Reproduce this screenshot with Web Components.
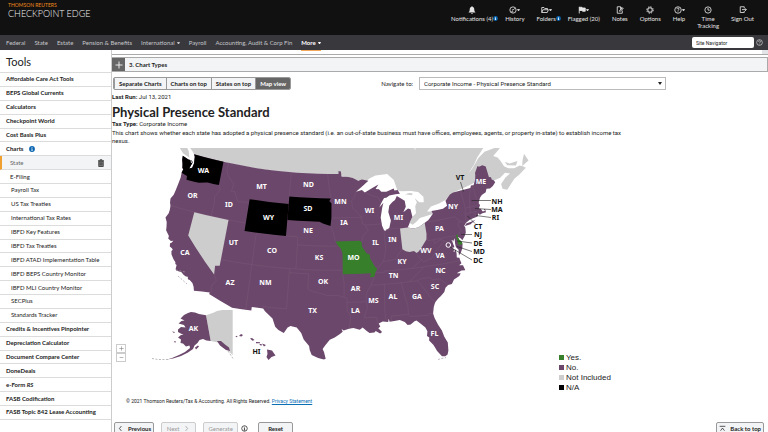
<!DOCTYPE html>
<html lang="en">
<head>
<meta charset="utf-8">
<title>Checkpoint Edge</title>
<style>
html,body{margin:0;height:100%}
body{overflow:hidden;background:#fff;color:#222;font:6px/8px Lato,"Noto Sans",sans-serif}
</style>
</head>
<body>
<checkpoint-app></checkpoint-app>
<script>
const define=(name,html,init)=>customElements.define(name,class extends HTMLElement{
  constructor(){
    super();
    const t=document.createElement('template');
    t.innerHTML=html;
    this.attachShadow({mode:'open'}).append(t.content.cloneNode(true));
  }
  connectedCallback(){ if(init&&!this.ready){this.ready=true;init(this,this.shadowRoot);} }
});

define('info-badge',`<style>
:host{display:inline-block;width:6px;height:6px;flex:none}
svg{display:block;width:100%;height:100%}
</style><svg viewBox="0 0 12 12"><circle cx="6" cy="6" r="5.8" fill="#0a66b0"/><path d="M5.2 2.3h1.7v1.6H5.2zM4.6 5h2.3v3.6h.8v1H4.4v-1h.8V6h-.6z" fill="#fff"/></svg>`);

const glyphs={
bell:'<path fill="currentColor" stroke="none" d="M8 .5c.8 0 1.2.5 1.2 1.2C11.8 2.6 12.6 5 12.6 7.5c0 2.5.8 3.7 2 4.7v1H1.4v-1c1.2-1 2-2.2 2-4.7C3.4 5 4.2 2.6 6.8 1.7 6.8 1 7.2.5 8 .5zM6.2 13.8h3.6c-.2 1.2-.9 1.7-1.8 1.7s-1.6-.5-1.8-1.7z"/>',
history:'<circle cx="8" cy="8" r="6.3"/><path d="M11.5 4.5 8 8.5 5.8 7M4.5 11.5h4"/>',
folder:'<path d="M1.5 13V3h4.5l1.5 2h5.5v2.5M1.5 13l2.3-5.5h11L12.5 13z"/>',
flag:'<path d="M2.5 1.5v13.5"/><path fill="currentColor" d="M3 2.5h5l1 1.5h5.5v6.5H9l-1-1.5H3z"/>',
notes:'<path d="M12.5 9v5.5h-10v-13h6.5l3.5 3.5M9 1.5v4h3M7 10.5l.5-2L13 3.5l1.5 1.5L9 10z"/>',
gear:'<circle cx="8" cy="8" r="4.5" stroke-width="2"/><circle cx="8" cy="8" r="6.4" stroke-width="2" stroke-dasharray="2.8 2.226"/>',
help:'<circle cx="8" cy="8" r="6.5"/><path d="M5.8 6.3c0-3 4.4-2.8 4.4-.2C10.2 7.8 8 7.8 8 9.5M8 11v1.3"/>',
clock:'<circle cx="8" cy="8" r="6.3"/><path d="M8 4v4.3h3.5"/>',
exit:'<path d="M10.5 4.5V1.5h-8v11.5h8V10M6 7.2h8.5M12 4.5l2.7 2.7L12 10"/>',
trash:'<path fill="#999" d="M3.5 4.5h9v10.5h-9z"/><path d="M2 3.5h12M6 3V1.5h4V3M6 6.5v6.5M8 6.5v6.5M10 6.5v6.5"/>',
info:'<circle cx="8" cy="8" r="6.3"/><path d="M8 4v1.5M6.5 7H8v4.5M6.3 11.8h3.5"/>',
left:'<path d="M10 2.5 5.5 8 10 13.5"/>',
right:'<path d="M6 2.5 10.5 8 6 13.5"/>',
top:'<path d="M1.5 3h13M3.5 13 8 7l4.5 6"/>',
plus:'<path d="M8 1v14M1 8h14"/>',
minus:'<path d="M2 8h12"/>'
};
define('line-icon',`<style>
:host{display:inline-block;width:8px;height:8px;flex:none}
svg{display:block;width:100%;height:100%;fill:none;stroke:currentColor;stroke-width:1.7}
</style><svg viewBox="0 0 16 16" aria-hidden="true"></svg>`,(h,r)=>{r.querySelector('svg').innerHTML=glyphs[h.getAttribute('name')];});

define('tool-link',`<style>
:host{display:block}
a{position:relative;display:flex;flex-direction:column;align-items:center;color:#e4e4e4;text-decoration:none;font-size:6px;line-height:7px;text-align:center;gap:1px}
.icon{display:flex;align-items:center;height:9px}
.caret{display:none;border:1px solid transparent;border-top:2px solid #ccc;border-bottom:0;width:1px}
:host([caret]) .caret{display:block}
info-badge{display:none;position:absolute;left:100%;bottom:1px;width:5px;height:5px}
:host([badge]) info-badge{display:block}
</style><a href="#"><span class="icon"><line-icon></line-icon><i class="caret"></i></span><span><slot></slot></span><info-badge></info-badge></a>`,
(h,r)=>{const i=document.createElement('line-icon');i.setAttribute('name',h.getAttribute('icon'));r.querySelector('line-icon').replaceWith(i);});

define('top-bar',`<style>
:host{display:flex;justify-content:space-between;background:#111;min-height:35px;box-sizing:border-box;padding:2px 14px 4px 8px}
.brand{color:#f08c1c;font-size:5px;line-height:7px}
.brand b{display:block;font-weight:300;font-size:9px;line-height:9px;color:#f4f4f4}
nav{display:flex;gap:12px;padding-top:3px}
</style>
<div class="brand"><span>THOMSON REUTERS</span><b>CHECKPOINT EDGE</b></div>
<nav>
<tool-link icon="bell" badge>Notifications (4)</tool-link><tool-link icon="history" caret>History</tool-link>
<tool-link icon="folder" caret badge>Folders</tool-link><tool-link icon="flag" caret>Flagged (20)</tool-link>
<tool-link icon="notes">Notes</tool-link><tool-link icon="gear">Options</tool-link><tool-link icon="help" caret>Help</tool-link>
<tool-link icon="clock">Time<br>Tracking</tool-link><tool-link icon="exit">Sign Out</tool-link>
</nav>`);

define('main-nav',`<style>
:host{display:flex;align-items:center;background:#38383d;min-height:15px;padding:0 5px 0 6px}
nav{display:flex;gap:9px;flex:1;align-self:stretch}
a{display:flex;align-items:center;gap:2px;color:#c6c6c9;text-decoration:none;font-size:6px;line-height:7px}
a.on{color:#fff;font-weight:700;border-bottom:1px solid #f0a95a;margin-bottom:-1px}
i{border:1px solid transparent;border-top:2px solid currentColor;border-bottom:0;width:1px}
input{width:62px;height:11px;box-sizing:border-box;border:0;border-radius:2px;background:#fff;padding:0 4px;font:5px/7px Roboto,sans-serif;color:#222;margin-right:2px}
input::placeholder{color:#222;opacity:1}
line-icon{color:#ccc;width:7px;height:7px}
</style>
<nav><a href="#">Federal</a><a href="#">State</a><a href="#">Estate</a><a href="#">Pension &amp; Benefits</a><a href="#">International<i></i></a><a href="#">Payroll</a><a href="#">Accounting, Audit &amp; Corp Fin</a><a href="#" class="on">More<i></i></a></nav>
<input aria-label="Site Navigator" placeholder="Site Navigator"><line-icon name="help"></line-icon>`);

define('side-item',`<style>
:host{flex:1 1 0;min-height:10px;display:flex;align-items:center;border-bottom:1px solid #dcdcdc;box-sizing:border-box;padding:0 6px;font-size:6px;line-height:8px}
a{color:#222;text-decoration:none;font-weight:700}
:host([sub]){padding-left:11px}
:host([first]){padding-left:10px}
:host([sub]) a,:host([first]) a{font-weight:400}
:host([selected]){background:#f3f4f6;border-left:2px solid #f0a030;padding-left:8px}
:host([selected]) a{color:#666}
slot[name=end]{display:contents}
::slotted(info-badge){margin-left:5px}
::slotted(line-icon){margin-left:auto}
</style><a href="#"><slot></slot></a><slot name="end"></slot>`);

define('side-bar',`<style>
:host{display:flex;flex-direction:column;width:112px;flex:none;box-sizing:border-box;border-right:1px solid #ccc;padding-bottom:12px}
h2{margin:0;padding:5px 6px 3px;font-weight:400;font-size:11px;line-height:14px;border-bottom:1px solid #dcdcdc}
nav{flex:1;display:flex;flex-direction:column}
line-icon{color:#333}
</style><h2>Tools</h2><nav>
<side-item>Affordable Care Act Tools</side-item><side-item>BEPS Global Currents</side-item><side-item>Calculators</side-item><side-item>Checkpoint World</side-item><side-item>Cost Basis Plus</side-item>
<side-item>Charts<info-badge slot="end"></info-badge></side-item>
<side-item selected first>State<line-icon slot="end" name="trash"></line-icon></side-item><side-item first>E-Filing</side-item>
<side-item sub>Payroll Tax</side-item><side-item sub>US Tax Treaties</side-item><side-item sub>International Tax Rates</side-item><side-item sub>IBFD Key Features</side-item><side-item sub>IBFD Tax Treaties</side-item><side-item sub>IBFD ATAD Implementation Table</side-item><side-item sub>IBFD BEPS Country Monitor</side-item><side-item sub>IBFD MLI Country Monitor</side-item><side-item sub>SECPlus</side-item><side-item sub>Standards Tracker</side-item>
<side-item>Credits &amp; Incentives Pinpointer</side-item><side-item>Depreciation Calculator</side-item><side-item>Document Compare Center</side-item><side-item>DoneDeals</side-item><side-item>e-Form <em>RS</em></side-item><side-item>FASB Codification</side-item><side-item>FASB Topic 842 Lease Accounting</side-item>
</nav>`);

define('accordion-row',`<style>
:host{display:flex;border:1px solid #aaa;border-left:0;background:#f3f4f6;margin-top:2px;min-height:13px}
button{width:13px;border:0;padding:0;background:#666;color:#fff;display:grid;place-items:center}
h3{margin:0;padding:0 4px;align-self:center;font-size:6px;line-height:8px}
</style><button aria-label="Expand"><line-icon name="plus"></line-icon></button><h3><slot></slot></h3>`);

define('view-switch',`<style>
:host{display:flex;border:1px solid #999;border-radius:2px;overflow:hidden}
button{border:0;border-left:1px solid #999;background:#f3f4f6;color:#222;font:700 6px/11px Lato,sans-serif;padding:0 4px}
button:first-child{border:0}
button[aria-pressed=true]{background:#666;color:#fff}
</style><button>Separate Charts</button><button>Charts on top</button><button>States on top</button><button aria-pressed="true">Map view</button>`);

/* ---------- map: Albers equal-area conic, points are "degrees west,degrees north" ---------- */
const parse=s=>s.trim().split(/\s+/).map(p=>p.split(',').map(Number));
const rad=Math.PI/180,n=.60285,C=1.3512;
function project([w,lat]){
  const rho=Math.sqrt(C-2*n*Math.sin(lat*rad))/n,th=(96-w)*n*rad;
  return [334+457*rho*Math.sin(th),458*rho*Math.cos(th)-330.6];
}
function path(s,close){
  const p=parse(s);if(close)p.push(p[0]);
  const out=[];
  p.forEach((b,i)=>{
    if(i){const a=p[i-1],k=Math.max(1,Math.ceil(Math.abs(b[0]-a[0])/2));
      for(let j=1;j<k;j++)out.push(project([a[0]+(b[0]-a[0])*j/k,a[1]+(b[1]-a[1])*j/k]));}
    out.push(project(b));
  });
  return 'M'+out.map(q=>q.map(v=>v.toFixed(1)).join(' ')).join('L')+(close?'Z':'');
}
const usa=`124.7,48.4 124.6,47.9 124.35,47.5 124.2,47.2 124.1,46.9 123.9,46.8 124.0,46.3 123.9,45.7 124.0,44.8 124.1,44.0 124.2,43.4 124.55,42.84 124.4,42.3 124.2,42 124.1,41.5 124.1,41 124.4,40.4 124,39.9 123.8,39.3 123.7,38.9 123,38.3 123,38 122.5,37.8 122.1,37.9 122.3,37.6 122.5,37.5 122.4,37.1 122,36.95 121.8,36.8 121.95,36.6 121.8,36.2 121.3,35.7 120.9,35.4 120.85,35.2 120.6,35.1 120.6,34.6 120.45,34.45 119.6,34.4 119.2,34.15 118.8,34 118.5,34.03 118.4,33.75 118.1,33.7 117.6,33.4 117.3,33 117.12,32.53 114.72,32.72 114.8,32.5 111.07,31.33 108.21,31.33 108.21,31.78 106.53,31.78 106.2,31.45 105,30.65 104.5,29.65 104,29.3 103.2,28.98 102.7,29.7 102.3,29.88 101.4,29.77 100.7,29.1 100.3,28.3 99.5,27.5 99.4,27 99.1,26.4 98.2,26.05 97.4,25.85 97.15,25.95 97.4,26.8 97.6,27.2 97.2,27.7 96.6,28.35 95.9,28.65 95.2,29.05 94.75,29.35 94.9,29.7 94.6,29.5 93.85,29.7 93.2,29.78 92.3,29.55 91.85,29.8 91.3,29.35 90.9,29.1 90.2,29.1 90,29.3 89.4,28.95 89.1,29.1 89.6,29.6 89.3,29.8 89.5,30.2 88.9,30.4 88.1,30.3 88,30.7 87.9,30.3 87.2,30.35 86.4,30.4 85.7,30.1 85.35,29.68 84.9,29.7 84.3,30.05 84,30.1 83.4,29.6 82.85,29.1 82.65,28.6 82.8,28 82.5,27.8 82.6,27.4 82.1,26.8 81.9,26.4 81.7,25.95 81.15,25.2 80.7,25.15 80.35,25.3 80.15,25.8 80.05,26.8 80.4,27.6 80.6,28.4 81,29.2 81.35,30.1 81.45,30.7 81.2,31.5 80.9,32.03 80.4,32.4 79.9,32.7 79.3,33.1 79,33.6 78.55,33.86 77.95,33.9 77.5,34.4 76.6,34.7 76.3,35 76.9,35.1 76.1,35.3 75.5,35.25 75.7,35.9 76.3,36 75.85,36.2 75.97,36.55 76,36.9 76.4,37 76.3,37.5 76.3,37.9 76.9,38.3 76.4,38.3 76.5,39 76.1,39.4 76.2,38.8 76.2,38.3 75.85,37.9 76,37.2 75.6,37.5 75.2,38 75.05,38.5 75.1,38.8 75.4,39.1 75.55,39.5 75.1,39.2 74.95,38.95 74.4,39.4 74.1,39.8 74,40.4 74.1,40.65 73.7,40.95 72.9,41.25 71.9,41.33 71.5,41.38 71.35,41.75 71.1,41.5 70.65,41.6 70,41.6 70,42 70.2,42.05 70.1,41.8 70.5,41.8 70.7,42.2 71,42.3 70.65,42.65 70.8,42.85 70.7,43.1 70.3,43.55 69.9,43.8 69.1,44 68.8,44.4 68.2,44.3 67.6,44.5 67,44.85 67.15,45.15 67.45,45.3 67.45,45.6 67.8,45.7 67.8,47.07 68.3,47.35 69,47.3 69.2,47.45 70,46.7 70.05,46.4 70.3,45.9 70.4,45.75 70.85,45.25 71.3,45.3 71.5,45.01 74.7,45 75.3,44.85 76.3,44.2 76.2,43.55 77,43.28 79.05,43.27 78.9,42.9 79.8,42.25 80.5,41.98 81.7,41.5 82.7,41.5 83.5,41.7 83.15,42.1 83,42.35 82.45,42.95 82.6,43.9 83,44.05 83.9,43.65 83.35,44.3 83.4,45.05 84.7,45.75 85.1,45.3 85.6,45.1 86.2,44.7 86.5,43.9 86.2,42.8 86.6,41.9 87.3,41.62 87.5,41.65 87.8,42.3 87.9,43.3 87.5,44.5 87.2,45.1 88,44.55 87.6,45.1 87,45.7 86.6,45.7 86,45.95 84.9,46 84.1,46 84.4,46.5 85,46.5 85.1,46.75 86.5,46.45 87.4,46.5 87.8,46.85 88.4,46.9 87.8,47.45 88.9,47.1 90.4,46.55 90.9,46.9 92,46.7 91,47.25 89.6,48 90.8,48.2 91.5,48.08 92.5,48.45 93.3,48.6 94.6,48.7 94.7,49.3 95.15,49.38 95.15,49 122.75,49 122.5,48.7 122.4,48.3 122.3,47.9 122.4,47.3 122.9,47.1 122.6,47.9 122.8,48.15 123.5,48.15`;
const land=[
`122.75,49 123.2,49.3 124,49.7 125,50.2 127.5,51.2 128,54 60,54 66.5,50.2 67.2,49.4 68.8,48.5 69.8,47.7 71.2,46.85 70.2,47.35 68.6,48.4 67.2,48.9 64.3,49 64.3,48.7 65.9,48.05 65.2,47.7 64.9,47.2 64.6,46.4 64,46 63,45.75 61.9,45.85 61.4,45.6 61,45.3 62.5,44.8 63.6,44.5 64.5,44 65.4,43.5 66.1,43.8 66.1,44.4 65,45 64,45.3 64.8,45.6 65.9,45.2 67,45.1 70,45.6 74.7,45 76.3,44.3 77.5,44 79,43.85 79.8,43.3 79.05,43.2 78.9,42.87 80.2,42.75 81.2,42.65 81.9,42.25 82.6,41.95 83.1,42.25 82.45,42.95 81.75,43.3 81.7,44.2 81.3,44.65 81.6,45.2 80.9,44.6 80.1,44.5 80,45.2 80.8,45.9 82,46.15 83.9,46.3 84.5,46.5 84.6,46.9 84.9,47.8 86,48.65 88.2,48.6 89.3,48.3 90,48 92,48.2 95,48.9`,
`123.4,48.4 124.8,48.7 126.5,49.7 128,50.8 125.3,50.2 123.9,49.2`,
`61.5,45.65 60.1,46 60.4,47 61.1,46.3`,
`64.2,46.9 64,46.4 62.5,46 62,46.45 63.5,46.5`,
`82,45.6 83.2,45.85 82.4,45.95 81.8,45.8`];
const fills=[
['#000','124.7,48.4 124.6,47.9 124.35,47.5 124.1,46.9 123.9,46.8 124,46.3 123.4,46.2 122.9,46.1 122.8,45.65 121.2,45.65 120.5,45.7 119.3,45.93 118.98,46 116.92,46 117.03,49 122.75,49 122.5,48.7 122.4,48.3 122.3,47.9 122.4,47.3 122.9,47.1 122.6,47.9 122.8,48.15 123.5,48.15'],
['#000','111.05,45 104.05,45 104.05,41 111.05,41'],
['#000','104.05,45.94 96.56,45.94 96.85,45.6 96.45,45.3 96.45,43.5 96.6,42.5 97.9,42.8 98.5,43 104.05,43'],
['#387f2c','95.77,40.58 91.7,40.6 91.4,40.4 91.4,39.9 90.7,39 90.15,38.8 90.2,38.4 89.5,37.3 89.15,37 89.5,36.5 89.7,36 90.37,36 90.15,36.5 94.62,36.5 94.62,39.1 94.9,39.7 95.3,40'],
['#cdcdcd','120,42 114.04,42 114.04,36.2 114.75,36.1 114.63,35 120,39'],
['#cdcdcd','84.82,39.1 84.8,41.7 83.5,41.7 82.7,41.5 81.7,41.5 80.52,41.98 80.52,40.6 80.7,39.9 81.7,39 82.2,38.6 82.6,38.4 83,38.7 83.7,38.65 84.3,38.8'],
['#387f2c','75.79,39.72 75.7,38.46 75.05,38.45 75.1,38.8 75.4,39.1 75.55,39.5 75.4,39.8'],
['#6b476b','74,40.6 73,40.65 72,41.05 72.6,40.95 73.7,40.87']];
const borders=['116.92,46 116.5,45.5 117.2,44.4 117.03,43.8 117.03,42','124.2,42 111.05,42','114.63,35 114.1,34.3 114.5,33.9 114.7,33.4 114.5,33 114.72,32.72','114.05,42 114.05,37 94.62,37','109.05,41 109.05,31.33','111.05,42 111.05,41 102.05,41','116.05,49 116.05,48 115.7,47.5 114.7,46.7 114.3,46.65 114.5,45.55 113.9,45.65 113.4,44.9 113,44.45 111.5,44.55 111.05,44.5','111.05,45 111.05,42','104.05,49 104.05,45','104.05,45.94 96.56,45.94','104.05,43 104.05,41','97.2,49 96.8,46.9 96.56,45.94','96.45,43.5 91.2,43.5 91.1,42.7 90.65,42.5 87.8,42.5','92,46.7 92.3,46.1 92.85,45.6 92.75,44.75 91.2,43.5','90.65,42.5 90.2,41.8 91.1,41.2 91.4,40.4','96.6,42.5 96.1,41.7 95.77,40.58','102.05,41 102.05,37','102.05,40 95.3,40','94.62,36.5 94.43,35.4 94.48,33.64','103,37 103,36.5 100,36.5 100,34.56 99.2,34.3 98,34.1 97,33.85 95.5,33.9 94.48,33.64 94.04,33.55','103.04,36.5 103.06,32 106.6,32 106.53,31.78','94.04,33.55 94.04,32 93.55,31.2 93.7,30.3 93.85,29.7','94.04,33 91.17,33','89.7,36 90.3,35 91.1,34 91.17,33 91,32.3 91.6,31 89.75,31 89.6,30.2','90.3,35 83.1,35','88.2,35 88.45,31.9 88.4,30.4','85.6,35 85.2,32.9 85,32.2 85.05,31','87.6,30.4 87.6,31 85.05,31 84.86,30.7 82.2,30.57 82,30.75 81.45,30.7','83.1,35 82.6,34.4 81.9,33.4 81.4,32.6 80.9,32.03','83.1,35 82.3,35.2 81.04,35.15 80.8,34.82 79.67,34.8 78.55,33.86','84.3,35 83.1,35.77 81.7,36.59','89.5,36.5 88.05,36.5 88.05,36.65 83.67,36.6 81.68,36.59 75.97,36.55','83.67,36.6 82,37.5 82.6,38.2','89.15,37 88.1,37.8 87,37.9 86,38 85.4,38.7 84.8,39.1','87.53,41.65 87.53,39.3 87.9,38.2 88.1,37.8','87.2,41.76 84.8,41.76','90.4,46.55 89.1,46.1 88.1,45.85 87.6,45.1','79.76,42.25 79.76,42 75.35,42 74.7,41.36 73.9,41','74.7,41.36 75.1,40.9 74.75,40.2 75.4,39.8','80.52,40.6 80.52,39.72 75.8,39.72','79.48,39.72 79.48,39.2 78.4,39.6 77.75,39.3 77,38.85 77.3,38.4 76.3,37.9','77.75,39.3 78.4,39 79.3,38.4 80.3,37.5 81.7,37.2 82,37.5','73.65,41 73.5,42.05 73.27,42.75 73.25,43.6 73.35,45','73.5,42.03 71.35,42.03','73.27,42.73 71.3,42.7 70.8,42.87','71.8,42 71.85,41.33','71.5,45 72,44.1 72.45,42.73 72.5,42.03','71.05,45.3 70.97,43.4 70.7,43.1'];
const labels='WA,203.5,173 OR,192.5,198 ID,229,207 MT,261.5,189 WY,268.5,220 UT,233.5,245 CO,272,253 CA,185,255 AZ,230,285 NM,265.5,285 ND,308.5,187 SD,308,211 NE,308,233 KS,319,260 OK,323,284 TX,312.5,313 MN,340.5,204 IA,344,225 MO,353.5,260 AR,355.5,291 LA,355.5,313 WI,369.5,213 IL,375.5,245 IN,392.5,242 MI,398.5,220 KY,402,264 TN,393.5,278 MS,373.5,303 AL,393,299 GA,417,299 FL,434.5,336 SC,435,289 NC,440.5,273 VA,440,258 WV,426,253 PA,439.5,231 NY,453,209 ME,481,184 AK,193.5,331'.split(' ');
const outer='VT,460,180 NH,497,203.5 MA,497,212 RI,495.5,220 CT,478,229 NJ,478,237 DE,478,246 MD,479,254 DC,478,263 HI,256.5,354'.split(' ');
const text=(l,f)=>l.map(s=>{const[a,x,y]=s.split(',');return `<text x="${x}" y="${y}" fill="${f}">${a}</text>`}).join('');

define('state-map',`<style>
:host{display:block;position:relative;min-width:0}
svg{display:block;width:100%;font:700 7px "Noto Sans",sans-serif;text-anchor:middle}
.zoom{position:absolute;left:4px;bottom:1px;display:grid}
.zoom button{width:10px;height:9px;box-sizing:border-box;border:1px solid #ccc;background:#fff;color:#777;padding:0;display:grid;place-items:center}
.zoom line-icon{width:5px;height:5px}
</style><svg viewBox="112 148 420 215" role="img" aria-label="Map of the United States by state"></svg>
<div class="zoom"><button aria-label="Zoom in"><line-icon name="plus"></line-icon></button><button aria-label="Zoom out"><line-icon name="minus"></line-icon></button></div>`,(h,r)=>{
r.querySelector('svg').innerHTML=
 land.map(s=>`<path fill="#cdcdcd" d="${path(s,true)}"/>`).join('')+
 `<path fill="#6b476b" d="${path(usa,true)}"/>`+
 borders.map(s=>`<path fill="none" stroke="#7a5878" stroke-width=".5" d="${path(s)}"/>`).join('')+
 fills.map(([c,s])=>`<path fill="${c}" d="${path(s,true)}"/>`).join('')+
 `<path fill="#cdcdcd" d="M206 315.3 213.3 312.7 217 311 222 310H232.7V355L230 352.5 226 347 218 342.5 210.7 341Z"/>
 <path fill="#6b476b" d="M180.5 318.5 184 315 188 313 191 312 195 312.5 199 314 206 315.3 210.7 341 206.5 340.5 203 339 199.5 340 197.5 343 194.5 345.5 193 349 188 352.5 181 356 173 358.5 167 359.5 172 358 179 355 185 352 190 348 189.5 345.5 186 346.5 183 343.5 180.5 343 181 339.5 178 337.5 181 335 183.5 335 178 332 178 329.5 181 327 185.5 327.5 184 325 178.5 323.5 181.5 321 184.5 320.5ZM217 341 221 341 225 344.5 229 347.5 230 351 226 350 220 345.5ZM195 347.5l3-2 1 1-3 3zM172 331.5l3 .5-1 1zM174 341l2 .5-1 1.5z"/>
 <path fill="none" stroke="#777" stroke-width=".5" stroke-dasharray="2 1.5" d="M152 358.5 158 359.5 168 359.5M228 351 233 358.5"/>
 <path fill="#6b476b" d="M235.5 336.5l1.5-.7.5 1-1.5.5zM239 336l2-2 2 1-1.5 1.5zM250 338.5l2-.5 2.5 2-2 .7zM256 342l4 .3v1h-4zM259.5 344l2 0 .5 1.5-2-.3zM262 343.5l4 1.5-2 1.5zM267 349.5l5 1 3.5 5-4 1.5-3 3-2-3 1-3z"/>
 <path fill="none" stroke="#a99aaa" stroke-width=".7" stroke-dasharray="2 1.5" d="M176 270l9 2M178 276l9 8M438 359.5 446 357.5"/>
 <path fill="none" stroke="#fff" stroke-width=".8" d="M415 147v2.5M190 155l1.5 8M452 240l3 7-1 5"/>
 <path fill="none" stroke="#222" stroke-width=".6" d="M460.5 182 463.5 191.5M471.5 200.5H491M475 208.5 491 209.5M476 215.5 491 217.5M467.5 216 475 223.5M461 234.5H472M457 241 472 243M457 246.5 472 251.5M450 247 472 260"/>
 <circle cx="448.3" cy="245" r="2.3" fill="none" stroke="#fff"/>`+
 text(labels,'#fff')+text(outer,'#111');
});

define('map-legend',`<style>
:host{display:block;font:8px/9px "Liberation Sans",Arial,sans-serif;color:#222}
ul{list-style:none;margin:0;padding:0;display:grid;gap:1px}
li{display:flex;align-items:center;gap:2px}
i{width:5px;height:5px;background:var(--c)}
</style><ul><li style="--c:#387f2c"><i></i>Yes.</li><li style="--c:#6b476b"><i></i>No.</li><li style="--c:#cdcdcd"><i></i>Not Included</li><li style="--c:#000"><i></i>N/A</li></ul>`);

define('action-button',`<style>
:host{display:block}
button{display:flex;align-items:center;justify-content:center;gap:4px;min-width:35px;box-sizing:border-box;border:1px solid #999;border-radius:2px;background:#f3f4f6;color:#222;font:700 6px/11px Lato,sans-serif;padding:0 2px;white-space:nowrap}
button:disabled{color:#999;border-color:#ccc;font-weight:400}
::slotted(line-icon){width:7px;height:7px}
</style><button><slot></slot></button>`,(h,r)=>{r.querySelector('button').disabled=h.hasAttribute('disabled');});

define('chart-page',`<style>
:host{display:flex;flex-direction:column;flex:1;min-width:0}
.prev,accordion-row,.bar,.run,h1,p,.chart,footer,.actions{flex-shrink:0}
.prev{height:4px;border-bottom:1px solid #aaa;display:flex;justify-content:end}
.prev::after{content:"";width:6px;background:#e3e4e8}
.bar{display:flex;align-items:center;margin:5px 0 0 1px}
label{margin-left:90px;margin-right:6px;font-size:6px}
.sel{position:relative;flex:0 0 247px;display:flex}
select{appearance:none;width:100%;height:13px;border:1px solid #bbb;border-radius:0;background:#fff;color:#222;font:6px/9px Roboto,sans-serif;padding:0 4px}
.sel::after{content:"";position:absolute;right:4px;top:5px;border:2px solid transparent;border-top:3px solid #222;border-bottom:0}
p{margin:0;font-family:Roboto,sans-serif}
.run{margin-top:3px}
h1{margin:4px 0 0;font-size:13px;line-height:15px}
.desc{max-width:522px;margin-top:1px}
.chart{display:grid;grid-template-columns:420fr 236fr;margin-top:3px}
state-map{align-self:start}
map-legend{margin:205px 0 0 27px}
footer{font:5px/7px Roboto,sans-serif;padding:6px 14px 0}
footer a{color:#0a6fb5}
.actions{display:flex;align-items:center;gap:7px;margin:17px 4px 0 2px}
.actions .end{margin-left:auto}
.actions>line-icon{width:7px;height:7px;margin:0 3px 0 -4px}
</style>
<div class="prev"></div>
<accordion-row>3. Chart Types</accordion-row>
<div class="bar"><view-switch></view-switch><label for="nav">Navigate to:</label><span class="sel"><select id="nav"><option>Corporate Income - Physical Presence Standard</option></select></span></div>
<p class="run"><b>Last Run:</b> Jul 13, 2021</p>
<h1>Physical Presence Standard</h1>
<p><b>Tax Type:</b> Corporate Income</p>
<p class="desc">This chart shows whether each state has adopted a physical presence standard (i.e. an out-of-state business must have offices, employees, agents, or property in-state) to establish income tax nexus.</p>
<div class="chart"><state-map></state-map><map-legend></map-legend></div>
<footer>© 2021 Thomson Reuters/Tax &amp; Accounting. All Rights Reserved. <a href="#">Privacy Statement</a></footer>
<div class="actions"><action-button><line-icon name="left"></line-icon>Previous</action-button><action-button disabled>Next <line-icon name="right"></line-icon></action-button><action-button disabled>Generate</action-button><line-icon name="info"></line-icon><action-button>Reset</action-button><action-button class="end"><line-icon name="top"></line-icon>Back to top</action-button></div>`);

define('checkpoint-app',`<style>
:host{display:flex;flex-direction:column;height:100vh}
main{display:flex;flex:1;min-height:0}
</style><top-bar></top-bar><main-nav></main-nav><main><side-bar></side-bar><chart-page></chart-page></main>`);
</script>
</body>
</html>
